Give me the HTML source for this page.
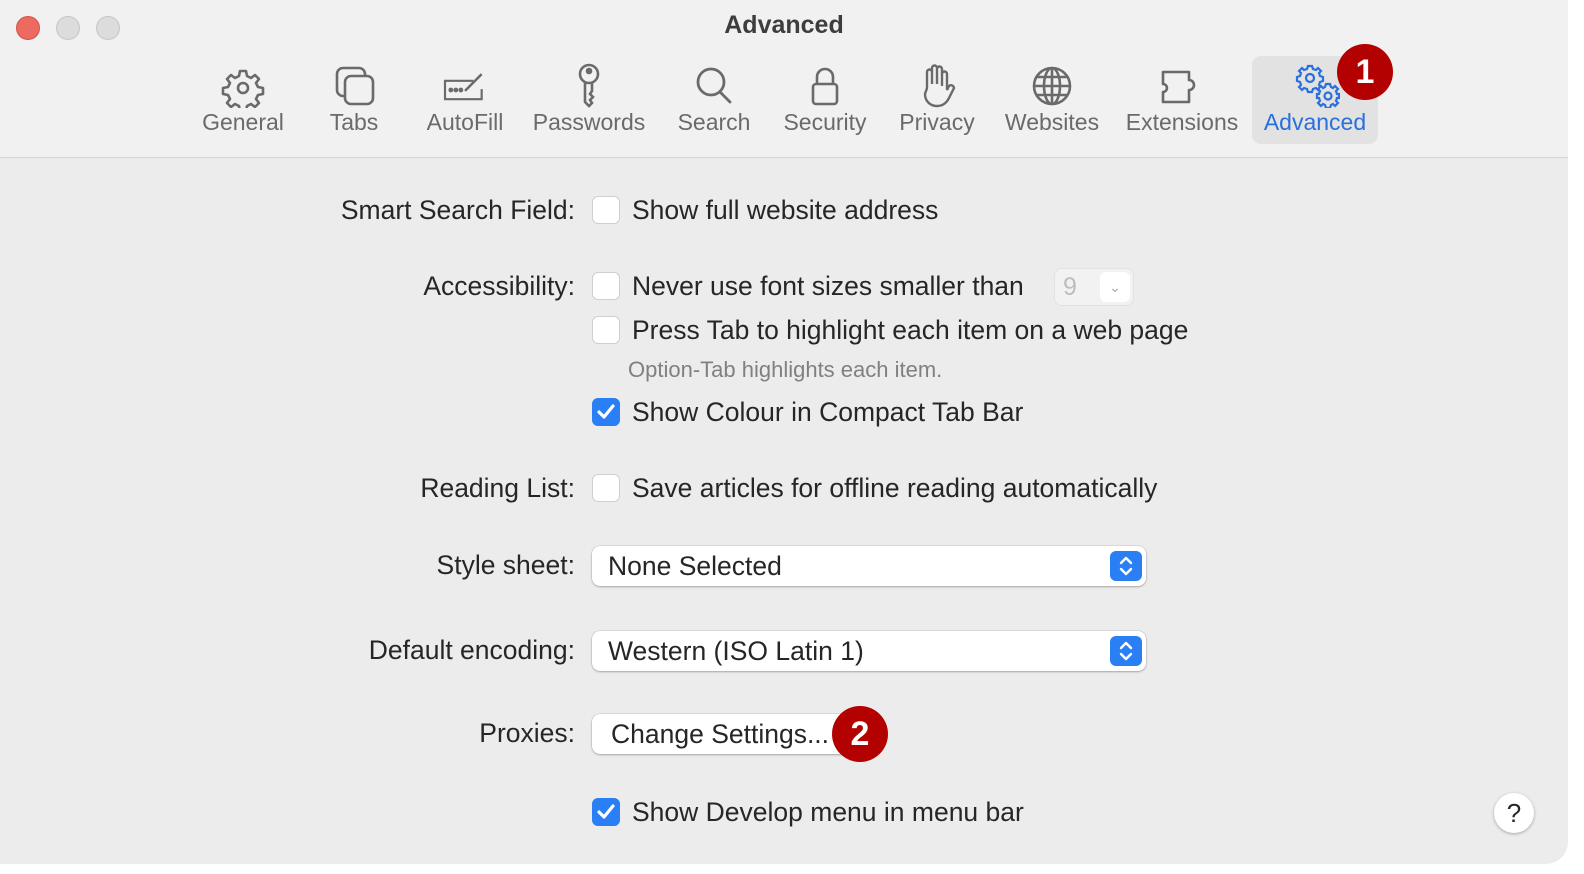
<!DOCTYPE html>
<html><head><meta charset="utf-8"><style>
*{margin:0;padding:0;box-sizing:border-box}
body{width:1584px;height:874px;background:#fff;font-family:"Liberation Sans",sans-serif;position:relative;overflow:hidden}
.win{position:absolute;left:0;top:0;width:1568px;height:864px;background:#ececec;border-radius:0 0 22px 0;overflow:hidden}
.tb{position:absolute;left:0;top:0;width:1568px;height:158px;background:#f1f1f1;border-bottom:1px solid #d6d6d6}
.dot{position:absolute;top:16px;width:24px;height:24px;border-radius:50%;background:#dcdcdc;border:1px solid #c6c6c6}
.title{position:absolute;left:0;width:1568px;top:11px;text-align:center;font-weight:bold;font-size:25px;color:#3d3d3d}
.tab{position:absolute;top:56px;height:88px;text-align:center;color:#6a6a6a;font-size:23px;white-space:nowrap}
.tab svg{display:block;margin:6px auto 0;width:50px;height:46px}
.tab span{display:block;margin-top:1px}
.sel{background:#e2e2e2;border-radius:9px;color:#2a6fdb}
.lbl{position:absolute;right:993px;font-size:26.5px;color:#262626;white-space:nowrap}
.txt{position:absolute;left:632px;font-size:26.5px;color:#262626;white-space:nowrap}
.cb{position:absolute;left:592px;width:28px;height:28px;border-radius:6px;background:#fff;border:1px solid #cfcfcf}
.cb.on{background:#2b7ff5;border-color:#2b7ff5}
.pop{position:absolute;left:592px;width:554px;height:40px;background:#fff;border-radius:8px;box-shadow:0 1px 2px rgba(0,0,0,.25),0 0 0 .5px rgba(0,0,0,.12);font-size:26.5px;color:#262626;padding:5px 0 0 16px;white-space:nowrap}
.pop i{position:absolute;right:4px;top:5px;width:32px;height:30px;border-radius:6px;background:#2b7ff5}
.badge{position:absolute;width:56px;height:56px;border-radius:50%;background:#b30000;color:#fff;font-weight:bold;font-size:34px;text-align:center;line-height:56px}
</style></head><body>
<div class="win">
<div class="tb">
<div class="dot" style="left:16px;background:#ec6a5f;border-color:#d35247"></div>
<div class="dot" style="left:56px"></div>
<div class="dot" style="left:96px"></div>
<div class="title">Advanced</div>

<div class="tab" style="left:198px;width:90px"><svg viewBox="0 0 50 46" fill="none" stroke="#6a6a6a" stroke-width="2.6"><path d="M22 9h6l1 5 4 2 4-3 4 4-3 4 2 4 5 1v6l-5 1-2 4 3 4-4 4-4-3-4 2-1 5h-6l-1-5-4-2-4 3-4-4 3-4-2-4-5-1v-6l5-1 2-4-3-4 4-4 4 3 4-2z" stroke-linejoin="round"/><circle cx="25" cy="26" r="5"/></svg><span>General</span></div>
<div class="tab" style="left:318px;width:72px"><svg viewBox="0 0 50 46" fill="none" stroke="#6a6a6a" stroke-width="2.6"><rect x="8" y="6" width="28" height="28" rx="6"/><rect x="16" y="14" width="28" height="28" rx="6" fill="#f1f1f1"/></svg><span>Tabs</span></div>
<div class="tab" style="left:420px;width:90px"><svg viewBox="0 0 60 46" fill="none" stroke="#6a6a6a" stroke-width="2.6"><path d="M40 18H6v22h44V28"/><path d="M30 30l20-20" stroke-width="3"/><circle cx="13" cy="29" r="1.6" fill="#6a6a6a"/><circle cx="19" cy="29" r="1.6" fill="#6a6a6a"/><circle cx="25" cy="29" r="1.6" fill="#6a6a6a"/></svg><span>AutoFill</span></div>
<div class="tab" style="left:530px;width:118px"><svg viewBox="0 0 50 46" fill="none" stroke="#6a6a6a" stroke-width="2.6"><circle cx="25" cy="12" r="9"/><circle cx="25" cy="9" r="2" fill="#6a6a6a"/><path d="M21 20v20l4 4 3-3-2-3 3-3-3-3 2-3v-9"/></svg><span>Passwords</span></div>
<div class="tab" style="left:672px;width:84px"><svg viewBox="0 0 50 46" fill="none" stroke="#6a6a6a" stroke-width="2.8"><circle cx="22" cy="20" r="13"/><path d="M31 30l10 10" stroke-linecap="round"/></svg><span>Search</span></div>
<div class="tab" style="left:778px;width:94px"><svg viewBox="0 0 50 46" fill="none" stroke="#6a6a6a" stroke-width="2.6"><rect x="13" y="22" width="24" height="20" rx="3"/><path d="M17 22v-7a8 8 0 0116 0v7"/></svg><span>Security</span></div>
<div class="tab" style="left:894px;width:86px"><svg viewBox="0 0 50 46" fill="none" stroke="#6a6a6a" stroke-width="2.4"><path d="M15 26V10a2.5 2.5 0 015 0v12V6a2.5 2.5 0 015 0v16V7a2.5 2.5 0 015 0v17V12a2.5 2.5 0 015 0v16l2-4a3 3 0 015 2l-5 10c-3 6-7 8-12 8-7 0-12-5-12-12z"/></svg><span>Privacy</span></div>
<div class="tab" style="left:1002px;width:100px"><svg viewBox="0 0 50 46" fill="none" stroke="#6a6a6a" stroke-width="2.6"><circle cx="25" cy="24" r="18"/><ellipse cx="25" cy="24" rx="8" ry="18"/><path d="M7 24h36M10 15h30M10 33h30M25 6v36"/></svg><span>Websites</span></div>
<div class="tab" style="left:1124px;width:116px"><svg viewBox="0 0 50 46" fill="none" stroke="#6a6a6a" stroke-width="2.6"><path d="M6 10h26v8a5 5 0 110 10v12H6V30a4 4 0 100-8z" stroke-linejoin="round"/></svg><span>Extensions</span></div>
<div class="tab sel" style="left:1252px;width:126px"><svg viewBox="0 0 50 46" fill="none" stroke="#2a6fdb" stroke-width="2.2"><path d="M18 4h4l1 3 3 1 2-2 3 3-2 2 1 3 3 1v4l-3 1-1 3 2 2-3 3-2-2-3 1-1 3h-4l-1-3-3-1-2 2-3-3 2-2-1-3-3-1v-4l3-1 1-3-2-2 3-3 2 2 3-1z"/><circle cx="20" cy="16" r="4"/><path d="M36 22h4l1 3 2 1 2-2 3 3-2 2 1 3h2v4h-2l-1 3 2 2-3 3-2-2-2 1-1 3h-4l-1-3-2-1-2 2-3-3 2-2-1-3h-2v-4h2l1-3-2-2 3-3 2 2 2-1z" fill="#e2e2e2"/><circle cx="38" cy="34" r="3.5"/></svg><span>Advanced</span></div>
</div>

<div class="lbl" style="top:195px">Smart Search Field:</div>
<div class="cb" style="top:196px"></div><div class="txt" style="top:195px">Show full website address</div>

<div class="lbl" style="top:271px">Accessibility:</div>
<div class="cb" style="top:272px"></div><div class="txt" style="top:271px">Never use font sizes smaller than</div>
<div style="position:absolute;left:1054px;top:268px;width:80px;height:38px;border-radius:8px;background:#f2f2f2;border:1px solid #e2e2e2;color:#bdbdbd;font-size:25px;padding:4px 0 0 8px">9<div style="position:absolute;right:3px;top:3px;width:30px;height:30px;border-radius:6px;background:#fff;color:#aaa;font-size:14px;text-align:center;line-height:30px">&#8964;</div></div>
<div class="cb" style="top:316px"></div><div class="txt" style="top:315px">Press Tab to highlight each item on a web page</div>
<div class="txt" style="top:357px;left:628px;font-size:22px;color:#808080">Option-Tab highlights each item.</div>
<div class="cb on" style="top:398px"><svg width="26" height="26" viewBox="0 0 26 26"><path d="M6 13l5 5 9-11" fill="none" stroke="#fff" stroke-width="3.2" stroke-linecap="round" stroke-linejoin="round"/></svg></div><div class="txt" style="top:397px">Show Colour in Compact Tab Bar</div>

<div class="lbl" style="top:473px">Reading List:</div>
<div class="cb" style="top:474px"></div><div class="txt" style="top:473px">Save articles for offline reading automatically</div>

<div class="lbl" style="top:550px">Style sheet:</div>
<div class="pop" style="top:546px">None Selected<i><svg width="32" height="30" viewBox="0 0 32 30" fill="none" stroke="#fff" stroke-width="2.4" stroke-linecap="round" stroke-linejoin="round"><path d="M11 12l5-5 5 5M11 18l5 5 5-5"/></svg></i></div>

<div class="lbl" style="top:635px">Default encoding:</div>
<div class="pop" style="top:631px">Western (ISO Latin 1)<i><svg width="32" height="30" viewBox="0 0 32 30" fill="none" stroke="#fff" stroke-width="2.4" stroke-linecap="round" stroke-linejoin="round"><path d="M11 12l5-5 5 5M11 18l5 5 5-5"/></svg></i></div>

<div class="lbl" style="top:718px">Proxies:</div>
<div class="pop" style="top:714px;width:260px;padding-left:19px">Change Settings...</div>
<div class="badge" style="left:832px;top:706px">2</div>

<div class="cb on" style="top:798px"><svg width="26" height="26" viewBox="0 0 26 26"><path d="M6 13l5 5 9-11" fill="none" stroke="#fff" stroke-width="3.2" stroke-linecap="round" stroke-linejoin="round"/></svg></div><div class="txt" style="top:797px">Show Develop menu in menu bar</div>

<div style="position:absolute;left:1494px;top:793px;width:40px;height:40px;border-radius:50%;background:#fff;box-shadow:0 1px 3px rgba(0,0,0,.3);text-align:center;font-size:26px;line-height:40px;color:#262626">?</div>
</div>
<div class="badge" style="left:1337px;top:44px">1</div>
</body></html>
